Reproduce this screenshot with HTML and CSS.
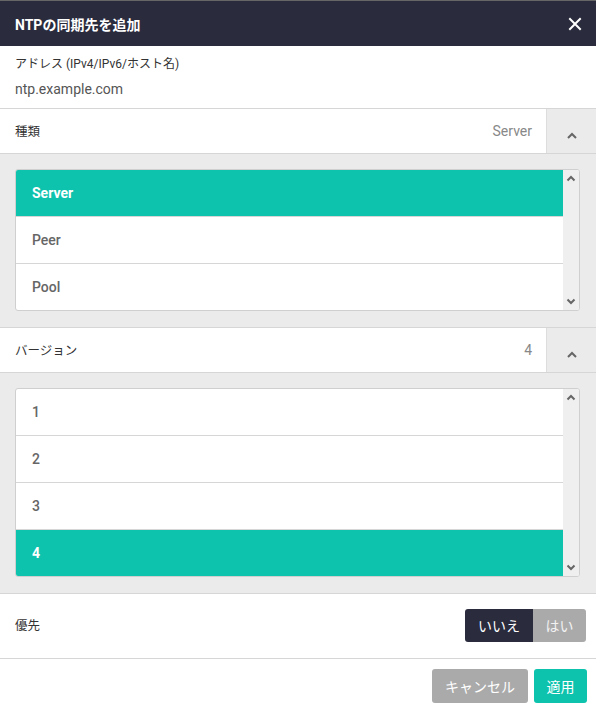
FILE: index.html
```html
<!DOCTYPE html>
<html lang="ja">
<head>
<meta charset="utf-8">
<link rel="stylesheet" href="styles.css">
</head>
<body>
<div class="dialog">
  <div class="header">
    <span class="title">NTPの同期先を追加</span>
    <svg class="close" width="14" height="14" viewBox="0 0 14 14"><path d="M2 2L12 12M12 2L2 12" stroke="#fff" stroke-width="2" stroke-linecap="square"/></svg>
  </div>
  <div class="field">
    <div class="field-label">アドレス (IPv4/IPv6/ホスト名)</div>
    <div class="field-value">ntp.example.com</div>
  </div>
  <div class="select-row">
    <span class="row-label">種類</span>
    <span class="row-value">Server</span>
    <span class="toggle"><svg width="12" height="8" viewBox="0 0 12 8"><path d="M2 6L6 2L10 6" fill="none" stroke="#666" stroke-width="2"/></svg></span>
  </div>
  <div class="panel">
    <div class="listbox">
      <div class="items">
        <div class="item selected">Server</div>
        <div class="item">Peer</div>
        <div class="item">Pool</div>
      </div>
      <div class="scrollbar">
        <svg width="10" height="7" viewBox="0 0 10 7"><path d="M1.5 5.5L5 2L8.5 5.5" fill="none" stroke="#666" stroke-width="2"/></svg>
        <svg width="10" height="7" viewBox="0 0 10 7"><path d="M1.5 1.5L5 5L8.5 1.5" fill="none" stroke="#666" stroke-width="2"/></svg>
      </div>
    </div>
  </div>
  <div class="select-row">
    <span class="row-label">バージョン</span>
    <span class="row-value">4</span>
    <span class="toggle"><svg width="12" height="8" viewBox="0 0 12 8"><path d="M2 6L6 2L10 6" fill="none" stroke="#666" stroke-width="2"/></svg></span>
  </div>
  <div class="panel">
    <div class="listbox">
      <div class="items">
        <div class="item">1</div>
        <div class="item">2</div>
        <div class="item">3</div>
        <div class="item selected">4</div>
      </div>
      <div class="scrollbar">
        <svg width="10" height="7" viewBox="0 0 10 7"><path d="M1.5 5.5L5 2L8.5 5.5" fill="none" stroke="#666" stroke-width="2"/></svg>
        <svg width="10" height="7" viewBox="0 0 10 7"><path d="M1.5 1.5L5 5L8.5 1.5" fill="none" stroke="#666" stroke-width="2"/></svg>
      </div>
    </div>
  </div>
  <div class="pref-row">
    <span class="row-label">優先</span>
    <div class="switch">
      <span class="sw-btn sw-on">いいえ</span>
      <span class="sw-btn sw-off">はい</span>
    </div>
  </div>
  <div class="footer">
    <span class="btn btn-cancel">キャンセル</span>
    <span class="btn btn-apply">適用</span>
  </div>
</div>
</body>
</html>
```
FILE: styles.css
```css
html, body {
  margin: 0;
  padding: 0;
  background: #fff;
}
body {
  font-family: Roboto, "Noto Sans CJK JP", sans-serif;
  color: #333;
}
.dialog {
  width: 596px;
  height: 712px;
  background: #fff;
  border-top: 1px solid #666;
  box-sizing: border-box;
}
.header {
  height: 45px;
  background: #2a2b3d;
  display: flex;
  align-items: center;
  justify-content: space-between;
  padding: 0 15px;
}
.title {
  color: #fff;
  font-size: 14px;
  font-weight: bold;
}
.close {
  margin-right: -1px;
}
.field {
  height: 63px;
  border-bottom: 1px solid #d6d6d6;
  padding: 9px 15px 0;
  box-sizing: border-box;
}
.field-label {
  font-size: 12px;
  color: #333;
  line-height: 18px;
}
.field-value {
  font-size: 14px;
  color: #555;
  margin-top: 7px;
  line-height: 18px;
}
.select-row {
  height: 45px;
  box-sizing: border-box;
  display: flex;
  align-items: center;
  padding-left: 15px;
  border-bottom: 1px solid #d6d6d6;
}
.row-label {
  font-size: 12.5px;
  color: #333;
  flex: 1;
  padding-bottom: 1px;
}
.row-value {
  font-size: 14px;
  color: #888;
  margin-right: 14px;
}
.toggle {
  width: 50px;
  height: 44px;
  background: #ebebeb;
  border-left: 1px solid #ddd;
  display: flex;
  align-items: center;
  justify-content: center;
  padding-top: 9px;
  box-sizing: border-box;
}
.panel {
  background: #ebebeb;
  padding: 15px 16px 16px 15px;
  border-bottom: 1px solid #d6d6d6;
}
.listbox {
  display: flex;
  background: #fff;
  border: 1px solid #cfcfcf;
  border-radius: 3px;
  overflow: hidden;
}
.items {
  flex: 1;
}
.item {
  height: 46px;
  border-bottom: 1px solid #d6d6d6;
  display: flex;
  align-items: center;
  padding-left: 16px;
  font-size: 14px;
  font-weight: 500;
  color: #666;
}
.item:last-child {
  border-bottom: none;
}
.item.selected {
  background: #0dc3ad;
  color: #fff;
  font-weight: bold;
}
.scrollbar {
  width: 16px;
  background: #efefef;
  display: flex;
  flex-direction: column;
  justify-content: space-between;
  align-items: center;
  padding: 5px 0 5px;
}
.pref-row {
  height: 65px;
  box-sizing: border-box;
  display: flex;
  align-items: center;
  padding: 0 9px 2px 15px;
  border-bottom: 1px solid #d6d6d6;
}
.switch {
  display: flex;
  border-radius: 3px;
  overflow: hidden;
  margin-right: 1px;
}
.sw-btn {
  height: 33px;
  display: flex;
  align-items: center;
  justify-content: center;
  font-size: 14px;
}
.sw-on {
  width: 68px;
  background: #2a2b3d;
  color: #fff;
}
.sw-off {
  width: 53px;
  background: #aaa;
  color: #f2f2f2;
}
.footer {
  display: flex;
  justify-content: flex-end;
  gap: 6px;
  padding: 10px 9px 0;
}
.btn {
  height: 34px;
  display: flex;
  align-items: center;
  justify-content: center;
  border-radius: 3px;
  font-size: 14px;
  color: #fff;
}
.btn-cancel {
  width: 96px;
  background: #aaa;
}
.btn-apply {
  width: 53px;
  background: #0dc3ad;
}
```
